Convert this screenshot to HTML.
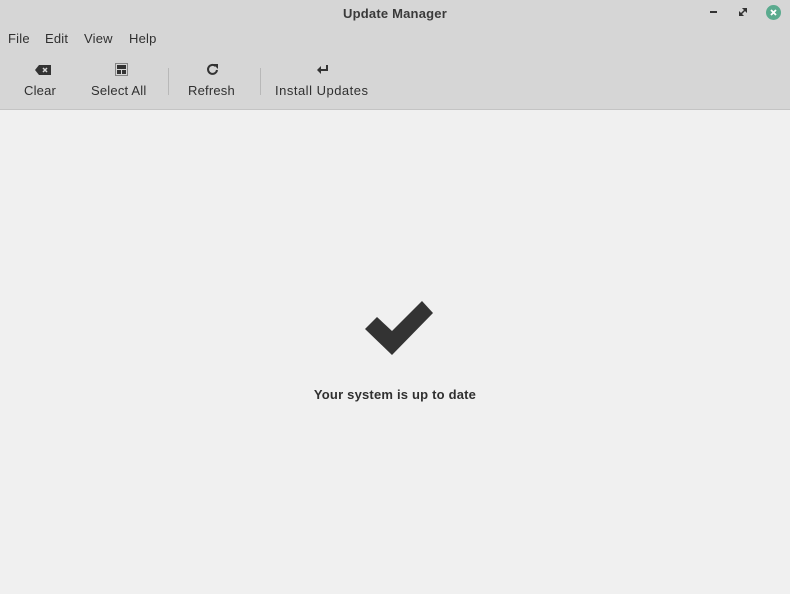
<!DOCTYPE html>
<html><head><style>
body{margin:0;width:790px;height:594px;background:#f0f0f0;font-family:"Liberation Sans",sans-serif;overflow:hidden;position:relative}
.hdr{position:absolute;left:0;top:0;width:790px;height:109px;background:#d6d6d6;border-bottom:1px solid #c4c4c4}
.t{position:absolute;font-size:13px;color:#303030;letter-spacing:0.2px}
.sep{position:absolute;top:68px;width:1px;height:27px;background:#b8b8b8}
</style></head><body>
<div class="hdr">
<div class="t" style="left:0;width:790px;text-align:center;top:6px;font-weight:bold;color:#3a3a3a">Update Manager</div>
<div style="position:absolute;left:710px;top:11px;width:7px;height:2px;background:#333"></div>
<svg style="position:absolute;left:739px;top:8px" width="8" height="8"><path d="M0 4V8H4Z M4 0H8V4Z M1 7L7 1" stroke="#333" stroke-width="1.5" fill="#333"/></svg>
<div style="position:absolute;left:766px;top:5px;width:15px;height:15px;border-radius:50%;background:#5aaa8e"></div>
<svg style="position:absolute;left:766px;top:5px" width="15" height="15"><path d="M5 5L10 10M10 5L5 10" stroke="#fff" stroke-width="1.8"/></svg>
<div class="t" style="left:8px;top:31px">File</div>
<div class="t" style="left:45px;top:31px">Edit</div>
<div class="t" style="left:84px;top:31px">View</div>
<div class="t" style="left:129px;top:31px">Help</div>
<svg style="position:absolute;left:35px;top:64px" width="17" height="12"><path d="M4 1H16V11H4L0 6Z" fill="#333"/><path d="M8 4L12 8M12 4L8 8" stroke="#d6d6d6" stroke-width="1.5"/></svg>
<svg style="position:absolute;left:115px;top:63px" width="13" height="13"><rect x="0.5" y="0.5" width="12" height="12" fill="none" stroke="#333" stroke-dasharray="1 1"/><rect x="2" y="2" width="9" height="4" fill="#333"/><rect x="2" y="7" width="4" height="4" fill="#333"/><rect x="7" y="7" width="4" height="4" fill="#333"/></svg>
<svg style="position:absolute;left:206px;top:63px" width="14" height="13"><path d="M11 7A4.5 4.5 0 1 1 9.5 3" fill="none" stroke="#333" stroke-width="2"/><path d="M7 1L12 1L12 6Z" fill="#333"/></svg>
<svg style="position:absolute;left:317px;top:64px" width="12" height="11"><path d="M10 1V6H3" fill="none" stroke="#333" stroke-width="2"/><path d="M0 6L4 2V10Z" fill="#333"/></svg>
<div class="t" style="left:24px;top:83px">Clear</div>
<div class="t" style="left:91px;top:83px">Select All</div>
<div class="sep" style="left:168px"></div>
<div class="t" style="left:188px;top:83px">Refresh</div>
<div class="sep" style="left:260px"></div>
<div class="t" style="left:275px;top:83px;letter-spacing:0.5px">Install Updates</div>
</div>
<svg style="position:absolute;left:0;top:0" width="790" height="594"><polygon points="365,329 377,317 392,331 422,301 433,313 392,355" fill="#333"/></svg>
<div class="t" style="left:0;width:790px;text-align:center;top:387px;font-weight:bold">Your system is up to date</div>
</body></html>
